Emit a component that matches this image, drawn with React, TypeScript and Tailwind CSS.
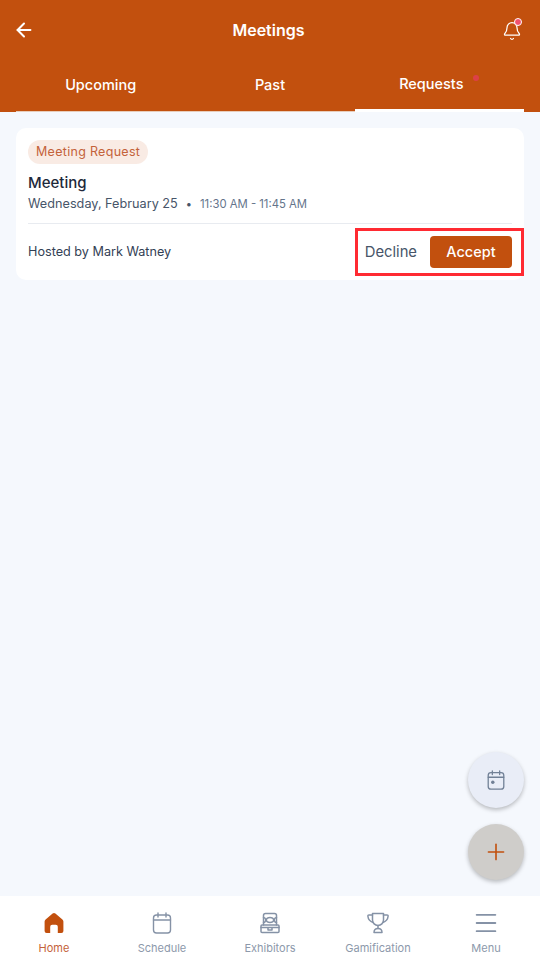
import { ArrowLeft, Bell, Menu, Plus } from "lucide-react";
import { ReactNode } from "react";

const tabs = ["Upcoming", "Past", "Requests"];

function HomeIcon() {
  return (
    <svg width="24" height="24" viewBox="0 0 24 24" fill="#c2500e">
      <path d="M10.6 2.6a2.2 2.2 0 0 1 2.8 0l7 5.8c.6.5 1 1.2 1 2V20a2 2 0 0 1-2 2h-3.6v-6.2a2 2 0 0 0-2-2h-3.6a2 2 0 0 0-2 2V22H4.6a2 2 0 0 1-2-2v-9.6c0-.8.4-1.5 1-2z" />
    </svg>
  );
}

function CalendarIcon({ dot, size = 24 }: { dot?: boolean; size?: number }) {
  return (
    <svg width={size} height={size} viewBox="0 0 24 24" fill="none" stroke="currentColor" strokeWidth="1.4" strokeLinecap="round">
      <rect x="3.5" y="4" width="17" height="18" rx="3" />
      <path d="M3.5 9h17M8 2v4M16 2v4" />
      {dot ? <circle cx="8.5" cy="14.500" r="1.900" fill="currentColor" stroke="none" /> : null}
    </svg>
  );
}

function ExhibitorIcon() {
  return (
    <svg width="24" height="24" viewBox="0 0 24 24" fill="none" stroke="currentColor" strokeWidth="1.5" strokeLinejoin="round" strokeLinecap="round">
      <path d="M5.5 14V4.5a2 2 0 0 1 2-2h9a2 2 0 0 1 2 2V14" />
      <path d="M5.5 6.5c1.5 0 2 1 2.5 2.5M18.5 6.5c-1.5 0-2 1-2.5 2.5" />
      <path d="M8 9c.5-1.5 2-2.5 4-2.5S15.500 7.500 16 9" />
      <path d="M5.500 11.500c1 0 2-1 2.500-2.500 .5 1.500 2 2.500 4 2.500s3.500-1 4-2.500c.5 1.500 1.500 2.500 2.500 2.500" />
      <rect x="3" y="14" width="18" height="7.500" rx="1" />
      <path d="M3 16.500h18M10 16.500v2.500h4v-2.500" />
    </svg>
  );
}

function TrophyIcon() {
  return (
    <svg width="24" height="24" viewBox="0 0 24 24" fill="none" stroke="currentColor" strokeWidth="1.5" strokeLinejoin="round" strokeLinecap="round">
      <path d="M6.500 2.500h11V9a5.500 5.500 0 0 1-11 0z" />
      <path d="M6.500 4H3c-.8 0-1.200.5-1.100 1.300.3 3 2 5.200 5.200 6.200" />
      <path d="M17.500 4H21c.8 0 1.200.5 1.100 1.300-.3 3-2 5.200-5.200 6.200" />
      <path d="M12 14.500v3" />
      <path d="M8 21.500c0-2.500 1.500-4 4-4s4 1.500 4 4z" />
    </svg>
  );
}

function NavItem({ icon, label, active }: { icon: ReactNode; label: string; active?: boolean }) {
  return (
    <div className={`flex flex-1 flex-col items-center ${active ? "text-[#c2500e]" : "text-[#8592a6]"}`}>
      <div className="flex h-6 items-center justify-center">{icon}</div>
      <span className={`mt-[5px] text-[11px] leading-[16px] ${active ? "text-[#c4623a]" : "text-[#8d99ab]"}`}>{label}</span>
    </div>
  );
}

export default function App() {
  return (
    <div className="flex h-[960px] w-[540px] flex-col overflow-hidden bg-[#f5f8fd] font-['Inter',sans-serif]">
      <header className="h-[112px] shrink-0 bg-[#c2500e] text-white">
        <div className="flex h-[60px] items-center justify-between pl-[13px] pr-[18px]">
          <ArrowLeft size={22} strokeWidth={2.2} />
          <h1 className="text-[16px] font-semibold">Meetings</h1>
          <div className="relative mt-[2px]">
            <Bell size={20} strokeWidth={1.5} />
            <span className="absolute right-0 top-[-3px] h-[8px] w-[8px] rounded-full border border-white bg-[#f0506e]" />
          </div>
        </div>
        <div className="flex px-4">
          {tabs.map((tab) => {
            const active = tab === "Requests";
            return (
              <div
                key={tab}
                className={`relative flex h-[52px] flex-1 items-center justify-center pb-[1px] text-[14.5px] font-medium ${
                  active ? "border-b-[3px] border-white" : "border-b border-[#e8cdbb]"
                }`}
              >
                <span className={active ? "relative mr-4" : "relative"}>
                  {tab}
                  {active ? (
                    <span className="absolute right-[-16px] top-[2px] h-[6px] w-[6px] rounded-full bg-[#dc4048]" />
                  ) : null}
                </span>
              </div>
            );
          })}
        </div>
      </header>

      <main className="relative flex-1 px-4 pt-4">
        <section className="rounded-[10px] bg-white px-3 pb-[12px] pt-3">
          <span className="block w-fit rounded-full bg-[#f9ebe4] px-2 py-[3px] text-[12.5px] leading-[18px] tracking-[0.3px] text-[#c4623a]">
            Meeting Request
          </span>
          <h2 className="mt-[8px] text-[15px] font-medium leading-[22px] text-[#1e293b]">Meeting</h2>
          <p className="flex text-[12.7px] leading-[20px] text-[#475569]">
            <span>Wednesday, February 25</span>
            <span className="mx-2 text-[11px]">•</span>
            <span className="text-[11.3px] text-[#64748b]">11:30 AM - 11:45 AM</span>
          </p>
          <div className="mt-[9px] border-t border-[#e8ebf0]" />
          <div className="flex items-center justify-between pt-3">
            <span className="text-[12.65px] text-[#334155]">Hosted by Mark Watney</span>
            <div className="relative flex items-center gap-[13px]">
              <div className="absolute inset-y-[-8px] left-[-10px] right-[-12px] border-[3px] border-[#ff2a32]" />
              <span className="text-[14.8px] text-[#475569]">Decline</span>
              <button className="h-8 w-[82px] rounded-[4px] bg-[#c2500e] text-[14.5px] font-medium text-white">
                Accept
              </button>
            </div>
          </div>
        </section>

        <div className="absolute bottom-[16px] right-4 flex flex-col gap-4">
          <button className="flex h-14 w-14 items-center justify-center rounded-full bg-[#e9edf7] text-[#718096] shadow-[0_2px_4px_rgba(0,0,0,0.25)]">
            <CalendarIcon dot size={22} />
          </button>
          <button className="flex h-14 w-14 items-center justify-center rounded-full bg-[#cfcdca] text-[#c2500e] shadow-[0_2px_4px_rgba(0,0,0,0.25)]">
            <Plus size={26} strokeWidth={1.5} />
          </button>
        </div>
      </main>

      <nav className="flex h-[64px] shrink-0 bg-white pt-[15px]">
        <NavItem active icon={<HomeIcon />} label="Home" />
        <NavItem icon={<CalendarIcon />} label="Schedule" />
        <NavItem icon={<ExhibitorIcon />} label="Exhibitors" />
        <NavItem icon={<TrophyIcon />} label="Gamification" />
        <NavItem icon={<Menu size={28} strokeWidth={1.6} />} label="Menu" />
      </nav>
    </div>
  );
}
